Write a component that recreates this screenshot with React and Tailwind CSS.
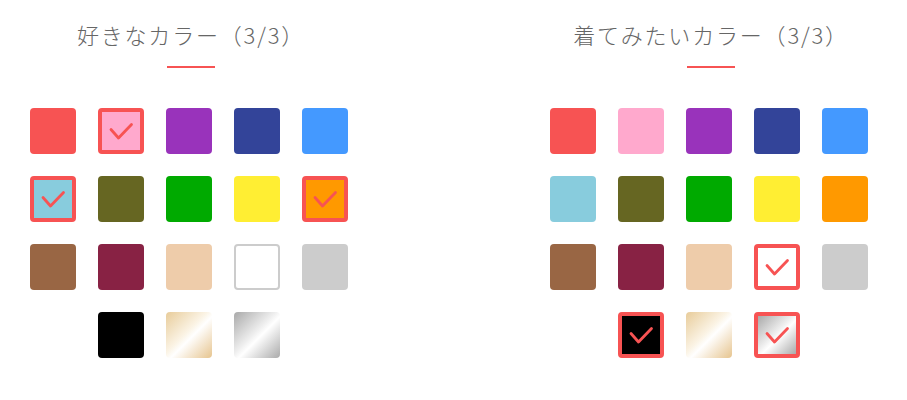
import { useState } from "react";

const COLORS = [
  { id: "red", bg: "bg-[#f75353]" },
  { id: "pink", bg: "bg-[#ffa9cd]" },
  { id: "purple", bg: "bg-[#9933bb]" },
  { id: "navy", bg: "bg-[#334499]" },
  { id: "blue", bg: "bg-[#4499ff]" },
  { id: "lightblue", bg: "bg-[#88ccdd]" },
  { id: "olive", bg: "bg-[#666622]" },
  { id: "green", bg: "bg-[#00aa00]" },
  { id: "yellow", bg: "bg-[#ffee33]" },
  { id: "orange", bg: "bg-[#ff9900]" },
  { id: "brown", bg: "bg-[#996644]" },
  { id: "wine", bg: "bg-[#882244]" },
  { id: "beige", bg: "bg-[#eeccaa]" },
  { id: "white", bg: "bg-white", outline: true },
  { id: "gray", bg: "bg-[#cccccc]" },
  { id: "black", bg: "bg-black", start: true },
  { id: "gold", bg: "bg-[linear-gradient(135deg,#e8cc9a_0%,#fbf4e6_45%,#ffffff_55%,#e6c48e_100%)]" },
  { id: "silver", bg: "bg-[linear-gradient(135deg,#a9a9a9_0%,#eeeeee_45%,#ffffff_55%,#aaaaaa_100%)]" },
];

const Check = () => (
  <svg viewBox="0 0 46 46" className="absolute inset-[-4px] w-[46px] h-[46px]">
    <polyline
      points="13,21.5 20.5,30 33.5,16.5"
      fill="none"
      stroke="#f75353"
      strokeWidth="2.8"
      strokeLinecap="round"
      strokeLinejoin="round"
    />
  </svg>
);

const Swatch = ({ color, checked, onClick }) => {
  let cls = `relative w-[46px] h-[46px] rounded-[4px] ${color.bg}`;
  if (checked) cls += " border-4 border-[#f75353]";
  else if (color.outline) cls += " border-2 border-[#cccccc]";
  if (color.start) cls += " col-start-2";
  return (
    <button type="button" onClick={onClick} className={cls}>
      {checked && <Check />}
    </button>
  );
};

const ColorPicker = ({ title, initial }) => {
  const [selected, setSelected] = useState(initial);

  const toggle = (id) => {
    setSelected((prev) => {
      if (prev.includes(id)) return prev.filter((x) => x !== id);
      if (prev.length >= 3) return prev;
      return [...prev, id];
    });
  };

  return (
    <div className="w-[318px] flex flex-col items-center">
      <h2 className="pl-[4px] text-[22px] leading-[30px] font-light tracking-[1.8px] text-[#666666] whitespace-nowrap">
        {title}（{selected.length}/3）
      </h2>
      <div className="ml-[4px] mt-[17px] w-[48px] h-[2px] bg-[#f75353]" />
      <div className="mt-[40px] grid grid-cols-5 gap-[22px]">
        {COLORS.map((c) => (
          <Swatch key={c.id} color={c} checked={selected.includes(c.id)} onClick={() => toggle(c.id)} />
        ))}
      </div>
    </div>
  );
};

const App = () => {
  return (
    <div className="w-[907px] h-[400px] bg-white pt-[19px] pl-[30px] flex gap-[202px] font-['Noto_Sans_CJK_JP','Noto_Sans',sans-serif]">
      <ColorPicker title="好きなカラー" initial={["pink", "lightblue", "orange"]} />
      <ColorPicker title="着てみたいカラー" initial={["white", "black", "silver"]} />
    </div>
  );
};

export default App;
